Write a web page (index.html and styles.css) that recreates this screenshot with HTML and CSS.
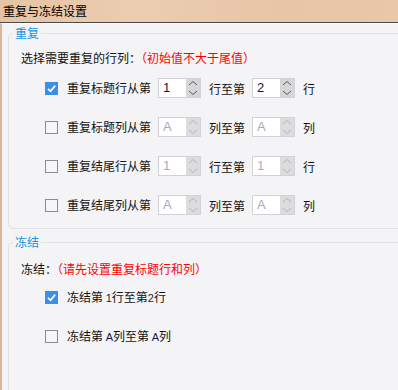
FILE: index.html
```html
<!DOCTYPE html>
<html lang="zh-CN">
<head>
    <meta charset="UTF-8">
    <title>重复与冻结设置</title>
    <link rel="stylesheet" href="styles.css">
</head>
<body>
    <div class="titlebar">重复与冻结设置</div>
    <div class="dialog">
        <fieldset class="group group-repeat">
            <legend>重复</legend>
            <div class="intro">选择需要重复的行列：<span class="hint">（初始值不大于尾值）</span></div>
            <div class="rows">
                <div class="row">
                    <span class="check checked"><svg viewBox="0 0 13 13"><path d="M3 6.8 L5.5 9.2 L10.2 3.6"/></svg></span>
                    <span class="label">重复标题行从第</span>
                    <span class="spin"><span class="val">1</span><span class="arrows"><svg viewBox="0 0 14 18"><path d="M3 6 L7 2.5 L11 6 M3 12 L7 15.5 L11 12"/></svg></span></span>
                    <span class="text">行至第</span>
                    <span class="spin"><span class="val">2</span><span class="arrows"><svg viewBox="0 0 14 18"><path d="M3 6 L7 2.5 L11 6 M3 12 L7 15.5 L11 12"/></svg></span></span>
                    <span class="text">行</span>
                </div>
                <div class="row">
                    <span class="check"></span>
                    <span class="label">重复标题列从第</span>
                    <span class="spin disabled"><span class="val">A</span><span class="arrows"><svg viewBox="0 0 14 18"><path d="M3 6 L7 2.5 L11 6 M3 12 L7 15.5 L11 12"/></svg></span></span>
                    <span class="text">列至第</span>
                    <span class="spin disabled"><span class="val">A</span><span class="arrows"><svg viewBox="0 0 14 18"><path d="M3 6 L7 2.5 L11 6 M3 12 L7 15.5 L11 12"/></svg></span></span>
                    <span class="text">列</span>
                </div>
                <div class="row">
                    <span class="check"></span>
                    <span class="label">重复结尾行从第</span>
                    <span class="spin disabled"><span class="val">1</span><span class="arrows"><svg viewBox="0 0 14 18"><path d="M3 6 L7 2.5 L11 6 M3 12 L7 15.5 L11 12"/></svg></span></span>
                    <span class="text">行至第</span>
                    <span class="spin disabled"><span class="val">1</span><span class="arrows"><svg viewBox="0 0 14 18"><path d="M3 6 L7 2.5 L11 6 M3 12 L7 15.5 L11 12"/></svg></span></span>
                    <span class="text">行</span>
                </div>
                <div class="row">
                    <span class="check"></span>
                    <span class="label">重复结尾列从第</span>
                    <span class="spin disabled"><span class="val">A</span><span class="arrows"><svg viewBox="0 0 14 18"><path d="M3 6 L7 2.5 L11 6 M3 12 L7 15.5 L11 12"/></svg></span></span>
                    <span class="text">列至第</span>
                    <span class="spin disabled"><span class="val">A</span><span class="arrows"><svg viewBox="0 0 14 18"><path d="M3 6 L7 2.5 L11 6 M3 12 L7 15.5 L11 12"/></svg></span></span>
                    <span class="text">列</span>
                </div>
            </div>
        </fieldset>

        <fieldset class="group group-freeze">
            <legend>冻结</legend>
            <div class="intro">冻结：<span class="hint">（请先设置重复标题行和列）</span></div>
            <div class="rows">
                <div class="row">
                    <span class="check checked"><svg viewBox="0 0 13 13"><path d="M3 6.8 L5.5 9.2 L10.2 3.6"/></svg></span>
                    <span class="label">冻结第 <span class="num">1</span>行至第<span class="num">2</span>行</span>
                </div>
                <div class="row">
                    <span class="check"></span>
                    <span class="label">冻结第 <span class="num">A</span>列至第 <span class="num">A</span>列</span>
                </div>
            </div>
        </fieldset>
    </div>
</body>
</html>
```

FILE: styles.css
```css
body {
    margin: 0;
    width: 398px;
    height: 390px;
    overflow: hidden;
    background-color: #f4f4f6;
    font-family: "Noto Sans CJK SC", sans-serif;
    font-size: 12px;
    color: #111;
}
.titlebar {
    height: 22px;
    line-height: 22px;
    padding-left: 3px;
    background: linear-gradient(90deg, #e6c3a3, #eccdb1 35%, #e7c5a7 70%, #e9c8aa);
    border-bottom: 1px solid #4a4a4a;
    color: #000;
}
.dialog {
    height: 365px;
    overflow: hidden;
    border-top: 1px solid #fbfbfc;
    border-left: 2px solid #dab79c;
    padding: 1px 0 0 6px;
}
.group {
    margin: 0 -20px 0 0;
    padding: 0 0 0 2px;
    border: 1px solid #e1e1e5;
    border-radius: 5px;
}
.group legend {
    margin-left: 2px;
    padding: 0 2px;
    line-height: 16px;
    color: #1296db;
}
.group-repeat {
    padding-top: 7px;
    padding-bottom: 13px;
}
.group-freeze {
    margin-top: 5px;
    padding-top: 9px;
    height: 200px;
}
.intro {
    height: 20px;
    line-height: 20px;
    padding-left: 10px;
}
.hint {
    color: #ff0000;
}
.rows {
    display: flex;
    flex-direction: column;
    gap: 19px;
    margin-top: 10px;
    padding-left: 34px;
}
.group-freeze .rows {
    margin-top: 8px;
}
.row {
    display: flex;
    align-items: center;
    height: 20px;
}
.check {
    width: 11px;
    height: 11px;
    border: 1px solid #8c8c8c;
    background-color: #f6f6f8;
    margin-right: 9px;
}
.check.checked {
    width: 13px;
    height: 13px;
    border: none;
    background-color: #3c8fe8;
}
.check svg {
    display: block;
    width: 13px;
    height: 13px;
    fill: none;
    stroke: #fff;
    stroke-width: 1.7;
}
.label {
    margin-right: 7px;
    line-height: 20px;
}
.num {
    font-family: "Liberation Sans", sans-serif;
    font-size: 11px;
    color: #1a1a40;
}
.text {
    margin: 0 7px 0 8px;
}
.spin {
    display: flex;
    width: 41px;
    height: 18px;
    border: 1px solid #d2d2d6;
    background-color: #fff;
}
.spin .val {
    flex: 1;
    padding-left: 4px;
    line-height: 18px;
    font-family: "Liberation Sans", sans-serif;
    font-size: 13px;
    color: #14143a;
}
.spin .arrows {
    width: 14px;
    background-color: #d6d6d8;
}
.spin svg {
    display: block;
    width: 14px;
    height: 18px;
    fill: none;
    stroke: #5a5a5a;
    stroke-width: 1;
}
.spin.disabled .val {
    color: #a8a8c4;
}
.spin.disabled .arrows {
    background-color: #dcdcde;
}
.spin.disabled svg {
    stroke: #b4b4b8;
}
```
